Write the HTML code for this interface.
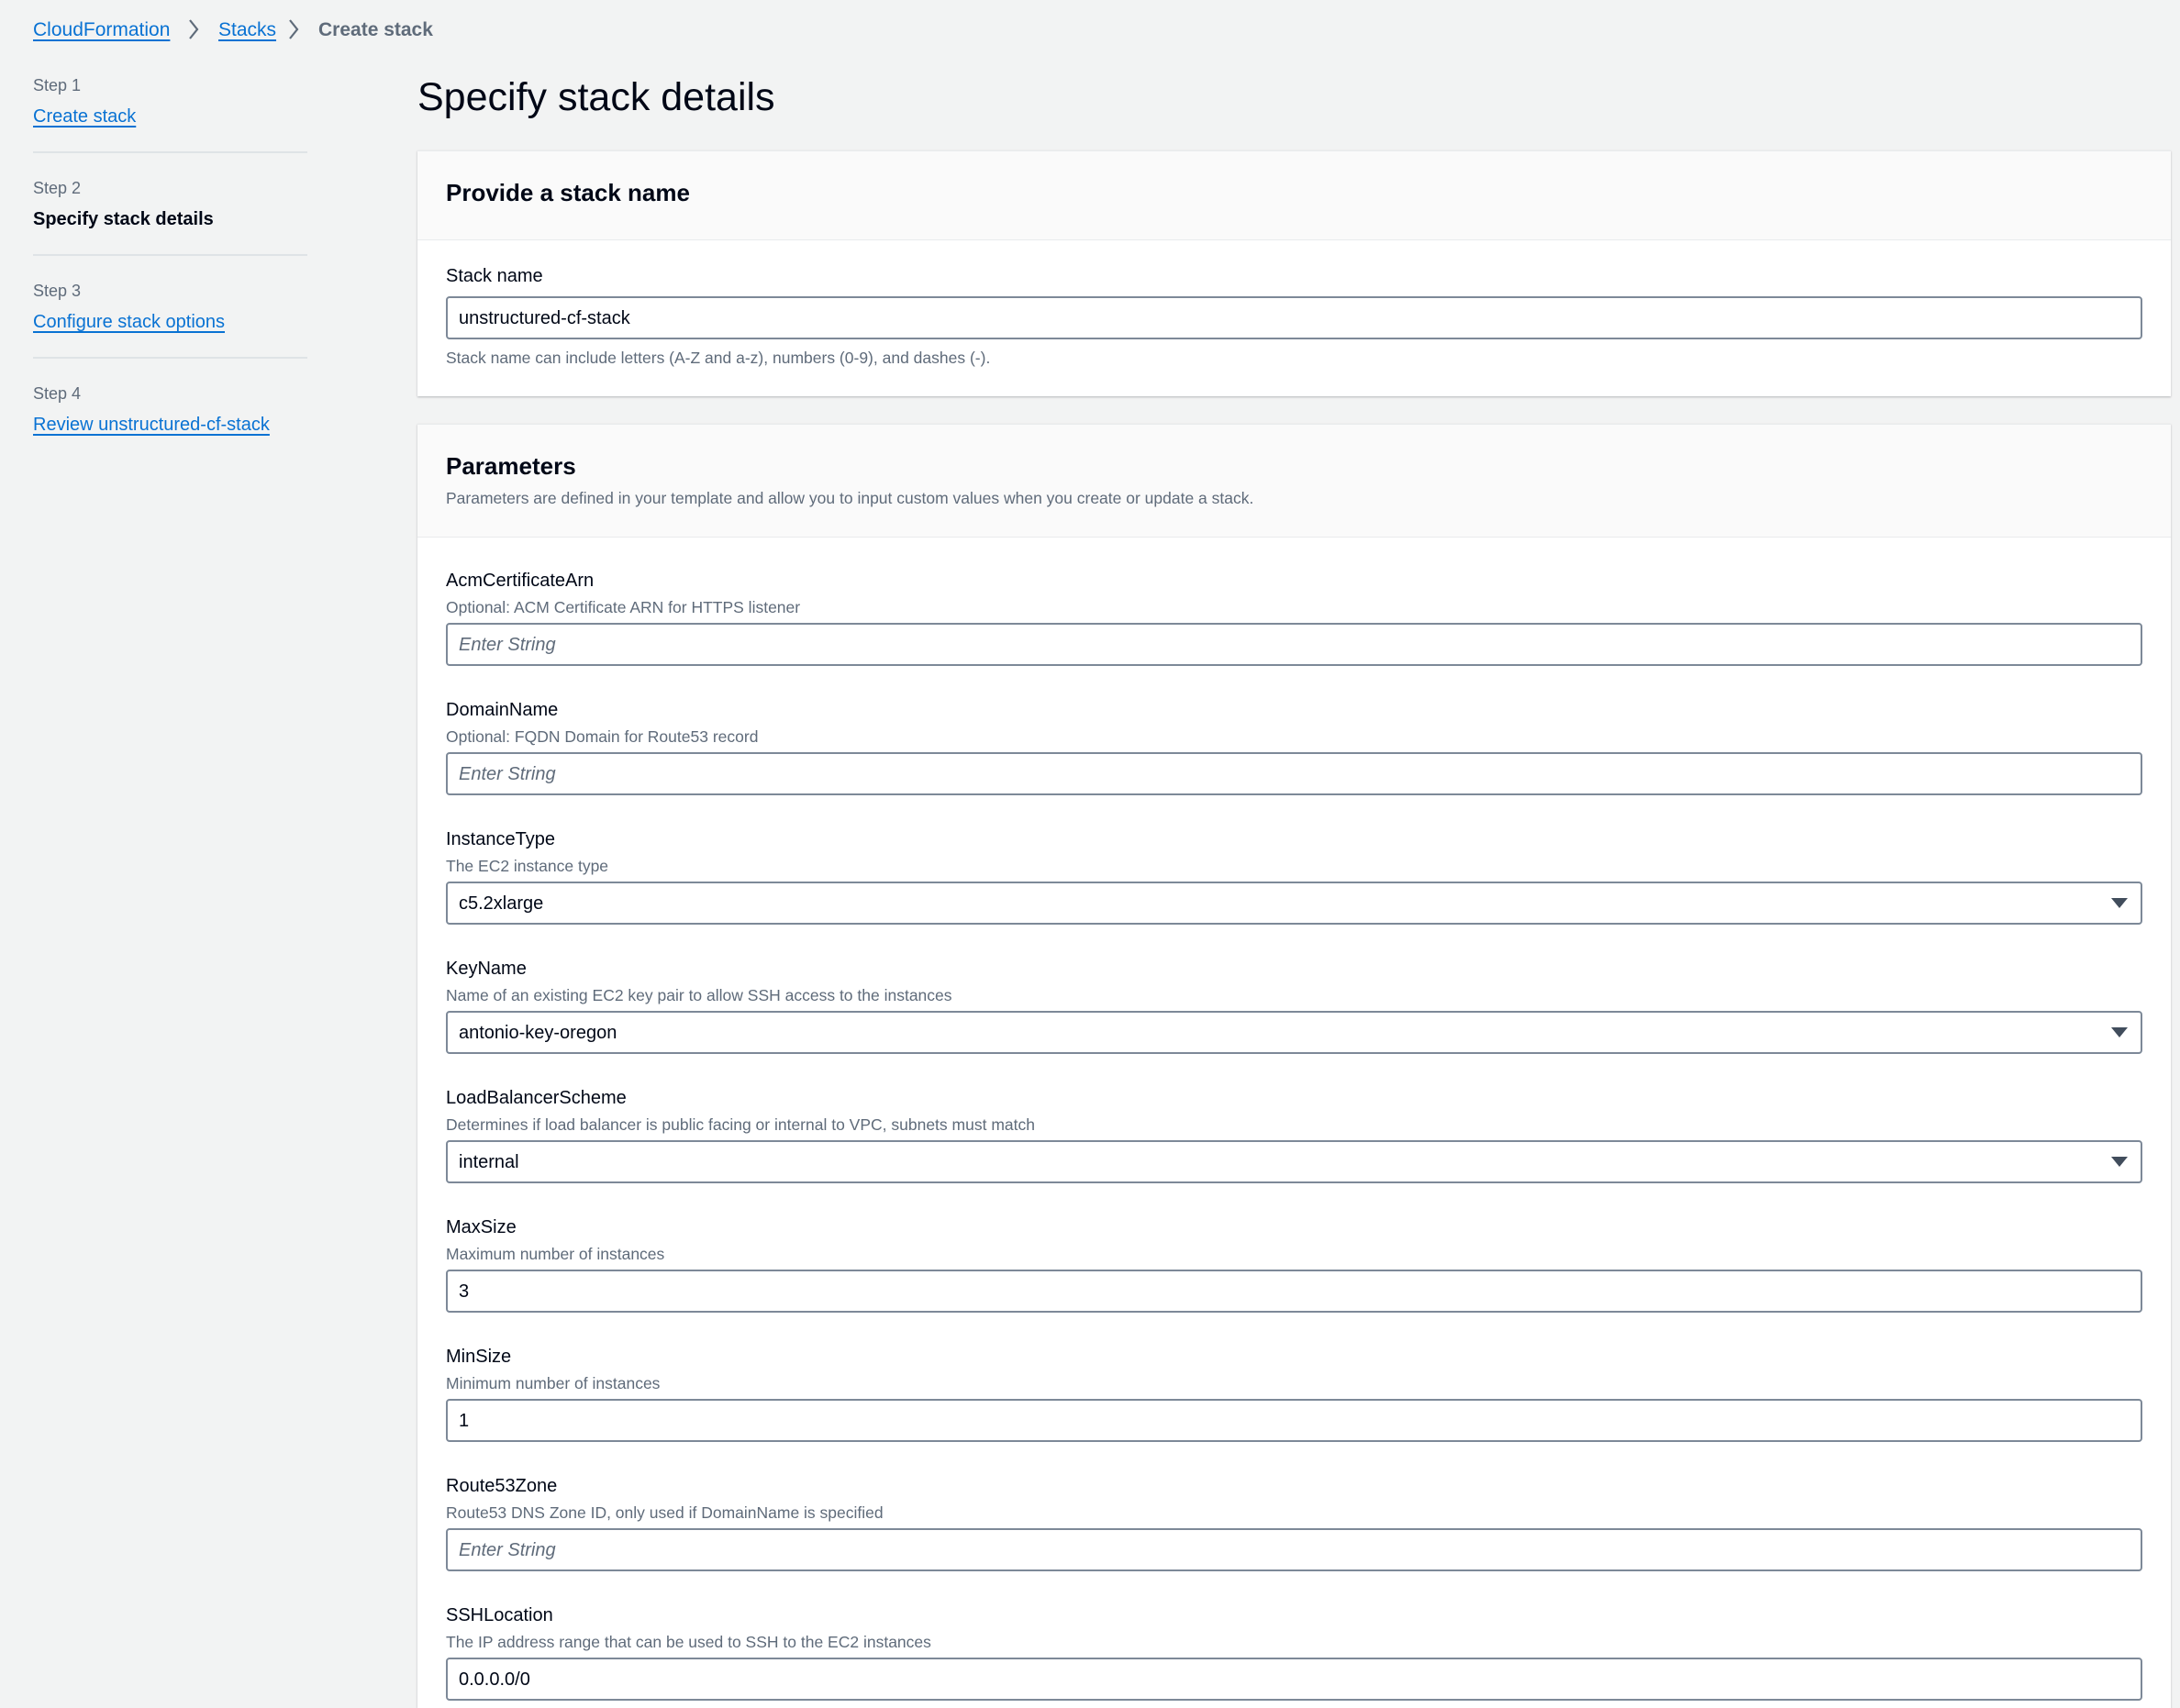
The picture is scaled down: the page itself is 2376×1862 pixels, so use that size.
<!DOCTYPE html>
<html><head><meta charset="utf-8"><style>
*{box-sizing:border-box;margin:0;padding:0}
body{width:2376px;height:1848px;overflow:hidden;background:#f2f3f3;font-family:"Liberation Sans",sans-serif;color:#000716;position:relative}
.a{position:absolute;white-space:nowrap}
.link{color:#0972d3;text-decoration:underline;text-underline-offset:4px;text-decoration-thickness:2px}
.step{color:#5f6b7a;font-size:18px}
.nav{font-size:20px}
.div{position:absolute;left:36px;width:299px;height:2px;background:#dfe3e6}
.card{position:absolute;left:455px;width:1911px;background:#fff;box-shadow:0 1px 2px rgba(0,7,22,.25);border-top:1px solid #e9ebed}
.hdr{background:#fafafa;border-bottom:1px solid #e9ebed;position:absolute;left:0;right:0;top:0}
.lbl{font-size:20px;color:#000716}
.dsc{font-size:17.5px;color:#5f6b7a}
.inp{position:absolute;left:486px;width:1849px;height:47px;border:2px solid #7d8998;border-radius:4px;background:#fff;font-size:20px;padding-left:12px;line-height:44px}
.ph{color:#5f6b7a;font-style:italic}
.arr{position:absolute;right:14px;top:16px;width:0;height:0;border-left:9px solid transparent;border-right:9px solid transparent;border-top:11px solid #414d5c}
</style></head><body>
<div class="a" style="left:36px;top:21px;font-size:21px"><span class="link">CloudFormation</span></div>
<svg class="a" style="left:204px;top:20px" width="14" height="24" viewBox="0 0 14 24"><path d="M3 2 L11 12 L3 22" fill="none" stroke="#5f6b7a" stroke-width="2.2"/></svg>
<div class="a" style="left:238px;top:21px;font-size:21px"><span class="link">Stacks</span></div>
<svg class="a" style="left:313px;top:20px" width="14" height="24" viewBox="0 0 14 24"><path d="M3 2 L11 12 L3 22" fill="none" stroke="#5f6b7a" stroke-width="2.2"/></svg>
<div class="a" style="left:347px;top:21px;font-size:21px;color:#5f6b7a;font-weight:bold">Create stack</div>

<div class="a step" style="left:36px;top:83px">Step 1</div>
<div class="a nav" style="left:36px;top:116px"><span class="link">Create stack</span></div>
<div class="div" style="top:165px"></div>
<div class="a step" style="left:36px;top:195px">Step 2</div>
<div class="a nav" style="left:36px;top:228px;font-weight:bold">Specify stack details</div>
<div class="div" style="top:277px"></div>
<div class="a step" style="left:36px;top:307px">Step 3</div>
<div class="a nav" style="left:36px;top:340px"><span class="link">Configure stack options</span></div>
<div class="div" style="top:389px"></div>
<div class="a step" style="left:36px;top:419px">Step 4</div>
<div class="a nav" style="left:36px;top:452px"><span class="link">Review unstructured-cf-stack</span></div>

<div class="a" style="left:455px;top:82px;font-size:43px">Specify stack details</div>

<div class="card" style="top:164px;height:268px"><div class="hdr" style="height:97px"></div></div>
<div class="a" style="left:486px;top:195px;font-size:26px;font-weight:bold">Provide a stack name</div>
<div class="a lbl" style="left:486px;top:290px">Stack name</div>
<div class="inp" style="top:323px">unstructured-cf-stack</div>
<div class="a dsc" style="left:486px;top:380px">Stack name can include letters (A-Z and a-z), numbers (0-9), and dashes (-).</div>

<div class="card" style="top:462px;height:1400px"><div class="hdr" style="height:123px"></div></div>
<div class="a" style="left:486px;top:493px;font-size:26px;font-weight:bold">Parameters</div>
<div class="a dsc" style="left:486px;top:533px">Parameters are defined in your template and allow you to input custom values when you create or update a stack.</div>

<div class="a lbl" style="left:486px;top:622px">AcmCertificateArn</div>
<div class="a dsc" style="left:486px;top:652px">Optional: ACM Certificate ARN for HTTPS listener</div>
<div class="inp ph" style="top:679px">Enter String</div>

<div class="a lbl" style="left:486px;top:763px">DomainName</div>
<div class="a dsc" style="left:486px;top:793px">Optional: FQDN Domain for Route53 record</div>
<div class="inp ph" style="top:820px">Enter String</div>

<div class="a lbl" style="left:486px;top:904px">InstanceType</div>
<div class="a dsc" style="left:486px;top:934px">The EC2 instance type</div>
<div class="inp" style="top:961px">c5.2xlarge<div class="arr"></div></div>

<div class="a lbl" style="left:486px;top:1045px">KeyName</div>
<div class="a dsc" style="left:486px;top:1075px">Name of an existing EC2 key pair to allow SSH access to the instances</div>
<div class="inp" style="top:1102px">antonio-key-oregon<div class="arr"></div></div>

<div class="a lbl" style="left:486px;top:1186px">LoadBalancerScheme</div>
<div class="a dsc" style="left:486px;top:1216px">Determines if load balancer is public facing or internal to VPC, subnets must match</div>
<div class="inp" style="top:1243px">internal<div class="arr"></div></div>

<div class="a lbl" style="left:486px;top:1327px">MaxSize</div>
<div class="a dsc" style="left:486px;top:1357px">Maximum number of instances</div>
<div class="inp" style="top:1384px">3</div>

<div class="a lbl" style="left:486px;top:1468px">MinSize</div>
<div class="a dsc" style="left:486px;top:1498px">Minimum number of instances</div>
<div class="inp" style="top:1525px">1</div>

<div class="a lbl" style="left:486px;top:1609px">Route53Zone</div>
<div class="a dsc" style="left:486px;top:1639px">Route53 DNS Zone ID, only used if DomainName is specified</div>
<div class="inp ph" style="top:1666px">Enter String</div>

<div class="a lbl" style="left:486px;top:1750px">SSHLocation</div>
<div class="a dsc" style="left:486px;top:1780px">The IP address range that can be used to SSH to the EC2 instances</div>
<div class="inp" style="top:1807px">0.0.0.0/0</div>
</body></html>
